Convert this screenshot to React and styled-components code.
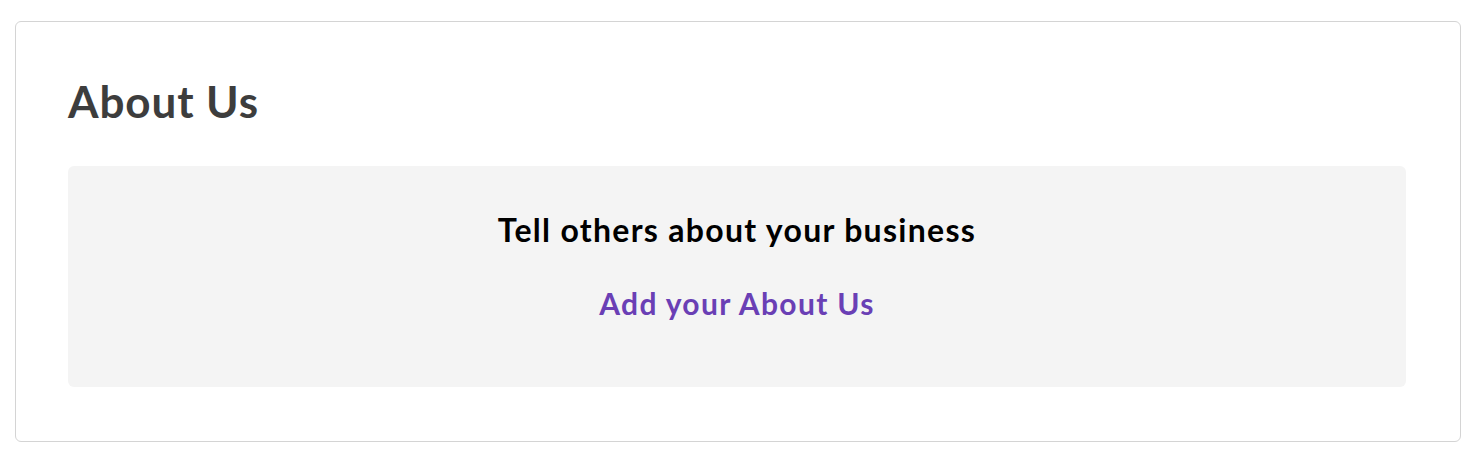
import React from "react";
import styled, { createGlobalStyle } from "styled-components";

const GlobalStyle = createGlobalStyle`
  html, body {
    margin: 0;
    padding: 0;
    background: #ffffff;
  }
  body {
    font-family: Lato, "Noto Sans", sans-serif;
  }
`;

const Page = styled.div`
  padding: 21px 21px 18px 15px;
`;

const Card = styled.section`
  border: 1px solid #d4d4d4;
  border-radius: 6px;
  background: #fff;
  padding: 52px 54px 54px 52px;
`;

const Title = styled.h2`
  margin: 0 0 38px 0;
  font-family: Lato, "Noto Sans", sans-serif;
  font-weight: 700;
  font-size: 44px;
  line-height: 54px;
  letter-spacing: 0.9px;
  color: #3d3d3d;
`;

const EmptyBox = styled.div`
  background: #f4f4f4;
  border-radius: 6px;
  height: 221px;
  display: flex;
  flex-direction: column;
  align-items: center;
  padding-top: 44px;
  box-sizing: border-box;
`;

const Prompt = styled.div`
  font-family: Lato, "Noto Sans", sans-serif;
  font-weight: 700;
  font-size: 32px;
  line-height: 40px;
  letter-spacing: 1.3px;
  color: #000;
`;

const AddLink = styled.a`
  margin-top: 35px;
  font-family: Lato, "Noto Sans", sans-serif;
  font-weight: 700;
  font-size: 30px;
  line-height: 36px;
  letter-spacing: 1.35px;
  color: #6a3fb5;
  text-decoration: none;
  cursor: pointer;
`;

const App = () => {
  return (
    <Page>
      <GlobalStyle />
      <Card>
        <Title>About Us</Title>
        <EmptyBox>
          <Prompt>Tell others about your business</Prompt>
          <AddLink>Add your About Us</AddLink>
        </EmptyBox>
      </Card>
    </Page>
  );
};

export default App;
